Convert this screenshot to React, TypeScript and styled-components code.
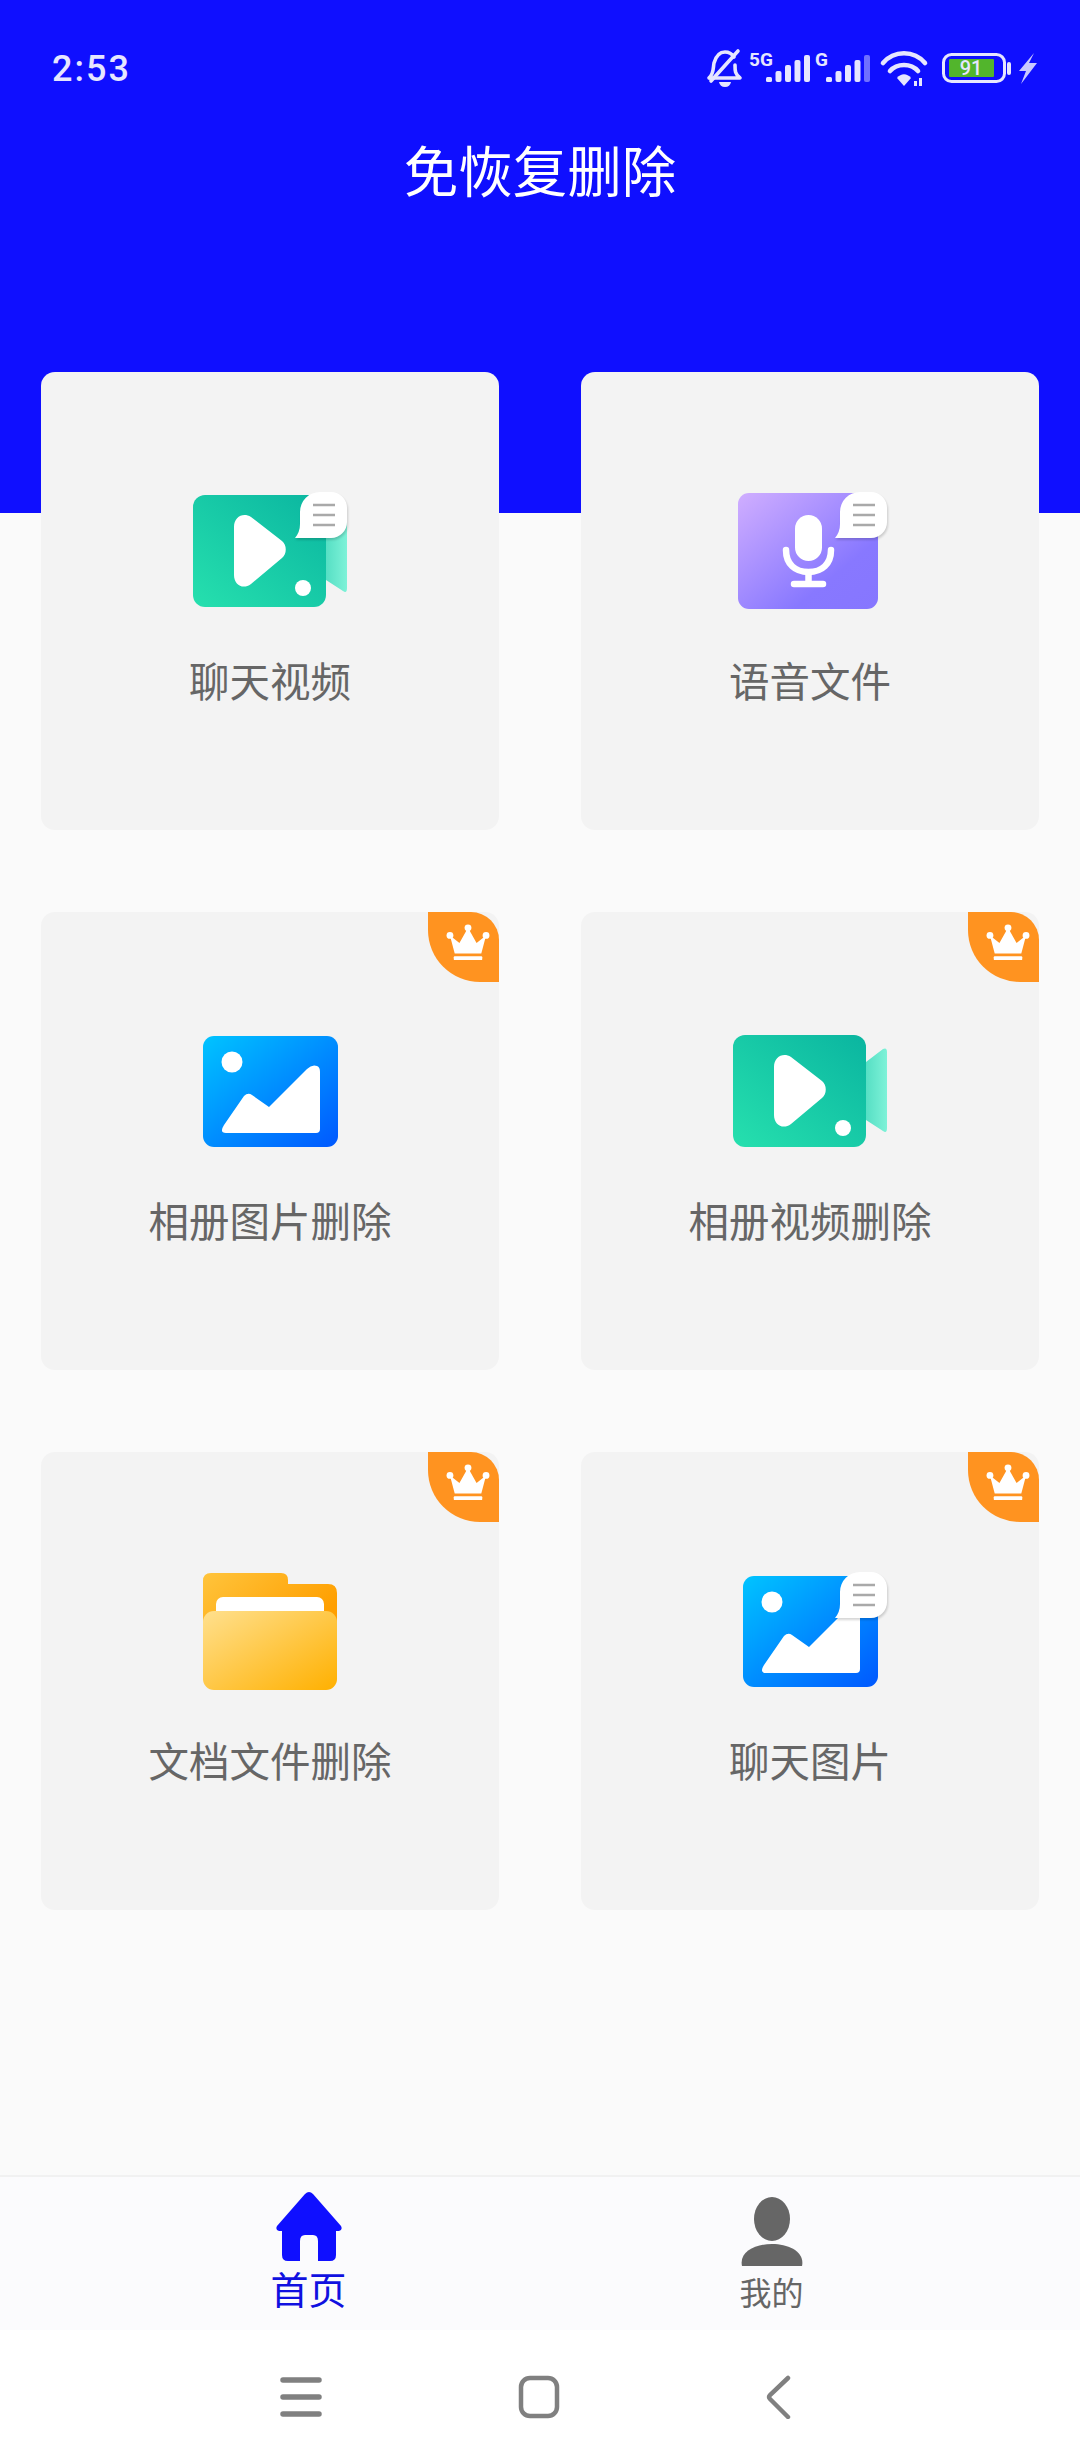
import React from "react";
import styled, { createGlobalStyle } from "styled-components";

const Global = createGlobalStyle`
  html, body { margin: 0; padding: 0; background: #fafafa; }
  * { box-sizing: border-box; }
`;

const Page = styled.div`
  width: 1080px;
  height: 2460px;
  display: flex;
  flex-direction: column;
  overflow: hidden;
  background: #fafafa;
  font-family: "Noto Sans CJK SC", "Noto Sans", sans-serif;
`;

const Header = styled.header`
  height: 513px;
  flex: none;
  background: #0f0fff;
  display: flex;
  flex-direction: column;
`;

const StatusBar = styled.div`
  height: 110px;
  padding: 28px 40px 0 52px;
  display: flex;
  align-items: center;
  justify-content: space-between;
`;

const Time = styled.span`
  font-family: Roboto, "Liberation Sans", sans-serif;
  font-weight: 500;
  font-size: 36px;
  letter-spacing: 2px;
  color: #e6e6ff;
`;

const StatusIcons = styled.svg`
  width: 340px;
  height: 50px;
  display: block;
`;

const Title = styled.h1`
  margin: 21px 0 0;
  text-align: center;
  font-size: 54.5px;
  line-height: 76px;
  font-weight: 400;
  color: #ffffff;
`;

const Grid = styled.main`
  flex: 1;
  min-height: 0;
  margin-top: -141px;
  padding: 0 41px;
  display: grid;
  grid-template-columns: 458px 458px;
  grid-auto-rows: 458px;
  gap: 82px;
  align-content: start;
`;

const Card = styled.section`
  position: relative;
  background: #f3f3f3;
  border-radius: 14px;
  padding-top: 108px;
  display: flex;
  flex-direction: column;
  align-items: center;
  overflow: hidden;
`;

const IconSvg = styled.svg`
  width: 180px;
  height: 140px;
  display: block;
  flex: none;
`;

const Label = styled.div`
  margin-top: 32px;
  font-size: 40.5px;
  line-height: 56px;
  color: #666666;
`;

const Badge = styled.div`
  position: absolute;
  top: 0;
  right: 0;
  width: 71px;
  height: 70px;
  padding: 0 0 8px 8px;
  background: #ff9320;
  border-radius: 0 28px 0 52px;
  display: flex;
  align-items: center;
  justify-content: center;
`;

const CrownSvg = styled.svg`
  width: 44px;
  height: 38px;
  display: block;
`;

const BubbleGroup = styled.g`
  filter: drop-shadow(1px 2px 1px rgba(0, 0, 0, 0.16));
`;

const TabBar = styled.nav`
  height: 155px;
  flex: none;
  background: #fbfbfd;
  border-top: 2px solid #f1f1f1;
  padding: 0 77px;
  display: grid;
  grid-template-columns: 1fr 1fr;
`;

const Tab = styled.div<{ $active?: boolean }>`
  display: flex;
  flex-direction: column;
  align-items: center;
  padding-top: ${(p) => (p.$active ? 14 : 20)}px;
`;

const TabIcon = styled.svg`
  width: 68px;
  height: 72px;
  display: block;
`;

const TabLabel = styled.span<{ $active?: boolean }>`
  font-size: ${(p) => (p.$active ? 38 : 32)}px;
  line-height: ${(p) => (p.$active ? 50 : 44)}px;
  color: ${(p) => (p.$active ? "#1010e0" : "#666666")};
`;

const NavBar = styled.div`
  height: 130px;
  flex: none;
  background: #ffffff;
  display: flex;
  align-items: flex-start;
  padding: 45px 0 0 280px;
`;

const NavIcon = styled.svg<{ $gap?: number }>`
  width: 42px;
  height: 44px;
  display: block;
  margin-right: ${(p) => p.$gap ?? 0}px;
`;

const Bubble = () => (
  <BubbleGroup>
    <path
      d="M120 32a20 20 0 0 1 20-20h11a16 16 0 0 1 16 16v14a16 16 0 0 1-16 16H115q5-6 5-14z"
      fill="#ffffff"
    />
    <path
      d="M133 25h22M133 35h22M133 45h22"
      stroke="#a9a9a9"
      strokeWidth="2.6"
      fill="none"
    />
  </BubbleGroup>
);

const VideoIcon = ({ id, chat }: { id: string; chat?: boolean }) => (
  <IconSvg viewBox="0 0 180 140">
    <defs>
      <linearGradient id={`${id}-b`} x1="0" y1="1" x2="1" y2="0">
        <stop offset="0" stopColor="#26e0ae" />
        <stop offset="1" stopColor="#0ab5a0" />
      </linearGradient>
      <linearGradient id={`${id}-f`} x1="0" y1="0" x2="1" y2="0">
        <stop offset="0" stopColor="#56dfc4" />
        <stop offset="1" stopColor="#7ef2d8" />
      </linearGradient>
    </defs>
    <path
      d="M146 42l17-13q4-2 4 3v76q0 6-4 3l-17-11z"
      fill={`url(#${id}-f)`}
    />
    <rect x="13" y="15" width="133" height="112" rx="12" fill={`url(#${id}-b)`} />
    <path
      d="M54 47c0-10 9-15 17-10l31 24c5 4 5 13 0 17l-31 26c-8 6-17 1-17-9z"
      fill="#ffffff"
    />
    <circle cx="123" cy="108" r="8" fill="#ffffff" />
    {chat && <Bubble />}
  </IconSvg>
);

const PictureIcon = ({ id, chat }: { id: string; chat?: boolean }) => (
  <IconSvg viewBox="0 0 180 140">
    <defs>
      <linearGradient id={id} x1="0" y1="0" x2="1" y2="1">
        <stop offset="0" stopColor="#00c4ff" />
        <stop offset="1" stopColor="#0058ff" />
      </linearGradient>
    </defs>
    <rect x="23" y="16" width="135" height="111" rx="11" fill={`url(#${id})`} />
    <circle cx="52" cy="42" r="10.5" fill="#ffffff" />
    <path
      d="M44 105l20-29q4-4 8-1l17 12 38-38q5-5 10-3 3 1 3 6v57q0 4-4 4H46q-7 0-2-8z"
      fill="#ffffff"
    />
    {chat && <Bubble />}
  </IconSvg>
);

const MicIcon = () => (
  <IconSvg viewBox="0 0 180 140">
    <defs>
      <linearGradient id="mic" x1="0" y1="0" x2="1" y2="1">
        <stop offset="0" stopColor="#d0aeff" />
        <stop offset="0.7" stopColor="#8878ff" />
        <stop offset="1" stopColor="#8676ff" />
      </linearGradient>
    </defs>
    <rect x="18" y="13" width="140" height="116" rx="11" fill="url(#mic)" />
    <rect x="75" y="35" width="27" height="46" rx="13.5" fill="#ffffff" />
    <path
      d="M66 70c0 14 9 22 22.5 22s22.5-8 22.5-22M88.500 92v12M74 104h29"
      fill="none"
      stroke="#ffffff"
      strokeWidth="6.500"
      strokeLinecap="round"
    />
    <Bubble />
  </IconSvg>
);

const FolderIcon = () => (
  <IconSvg viewBox="0 0 180 140">
    <defs>
      <linearGradient id="fb" x1="0" y1="0" x2="1" y2="0.5">
        <stop offset="0" stopColor="#ffc43c" />
        <stop offset="1" stopColor="#ff9f00" />
      </linearGradient>
      <linearGradient id="ff" x1="0" y1="0" x2="1" y2="1">
        <stop offset="0" stopColor="#ffe08e" />
        <stop offset="1" stopColor="#ffb000" />
      </linearGradient>
    </defs>
    <path
      d="M23 21q0-8 8-8h70q7 0 7 7v4h40q9 0 9 9v40H23z"
      fill="url(#fb)"
    />
    <rect x="36" y="37" width="108" height="40" rx="7" fill="#ffffff" />
    <rect x="23" y="51" width="134" height="79" rx="11" fill="url(#ff)" />
  </IconSvg>
);

const Crown = () => (
  <CrownSvg viewBox="0 0 46 40">
    <circle cx="4" cy="12" r="3.600" fill="#fff" />
    <circle cx="23" cy="4" r="3.600" fill="#fff" />
    <circle cx="42" cy="12" r="3.600" fill="#fff" />
    <path d="M4 12l10 8 9-16 9 16 10-8-5 19H9z" fill="#fff" />
    <rect x="8" y="34" width="30" height="4" rx="1" fill="#fff" />
  </CrownSvg>
);

const items = [
  { label: "聊天视频", icon: <VideoIcon id="v1" chat /> },
  { label: "语音文件", icon: <MicIcon /> },
  { label: "相册图片删除", icon: <PictureIcon id="p1" />, vip: true },
  { label: "相册视频删除", icon: <VideoIcon id="v2" />, vip: true },
  { label: "文档文件删除", icon: <FolderIcon />, vip: true },
  { label: "聊天图片", icon: <PictureIcon id="p2" chat />, vip: true },
];

const Bars = ({ x, dim }: { x: number; dim?: boolean }) => (
  <g fill="#e6e6ff">
    <rect x={x} y="32" width="6" height="5" rx="1.500" />
    <rect x={x + 9.5} y="26" width="6" height="11" rx="2" />
    <rect x={x + 19} y="20" width="6" height="17" rx="2" />
    <rect x={x + 28.5} y="15" width="6" height="22" rx="2" />
    <rect x={x + 38} y="10" width="6" height="27" rx="2" opacity={dim ? 0.45 : 1} />
  </g>
);

export default function App() {
  return (
    <Page>
      <Global />
      <Header>
        <StatusBar>
          <Time>2:53</Time>
          <StatusIcons viewBox="700 44 340 50" preserveAspectRatio="xMinYMin">
            <g transform="translate(0 45)">
              <g fill="none" stroke="#e6e6ff" strokeWidth="3.600" strokeLinecap="round" strokeLinejoin="round">
                <path d="M709 33c5-4 4-10 5-15 2-7 6-11 11-11 4 0 7 2 9 5M735 20c0 6 0 9 5 13H709" />
                <path d="M711 36L738 6" />
              </g>
              <path d="M719 37h12q-1 5-6 5t-6-5z" fill="#e6e6ff" />
              <text x="749" y="21" fontFamily="Roboto, sans-serif" fontWeight="700" fontSize="19" fill="#e6e6ff">5G</text>
              <Bars x={766} />
              <text x="815" y="21" fontFamily="Roboto, sans-serif" fontWeight="700" fontSize="19" fill="#e6e6ff">G</text>
              <Bars x={826} dim />
              <g fill="none" stroke="#e6e6ff" strokeWidth="4.600" strokeLinecap="round">
                <path d="M883 18c11-13 31-13 42 0" />
                <path d="M890 26c7-8 21-8 28 0" />
              </g>
              <path d="M897 33c4-5 10-5 14 0l-7 8z" fill="#e6e6ff" />
              <rect x="914" y="36" width="3" height="5" fill="#e6e6ff" />
              <rect x="919" y="33" width="3" height="8" fill="#e6e6ff" />
              <rect x="943.500" y="9.500" width="61" height="27" rx="8" fill="none" stroke="#e6e6ff" strokeWidth="3" />
              <rect x="949" y="14" width="45" height="18" rx="1" fill="#52b52c" />
              <text x="971" y="30" textAnchor="middle" fontFamily="Roboto, sans-serif" fontWeight="500" fontSize="20" fill="#e6e6ff">91</text>
              <rect x="1007" y="17" width="4" height="13" rx="2" fill="#e6e6ff" />
              <path d="M1034 8l-15 18h7l-5 13 16-21h-8z" fill="#c9c9ff" />
            </g>
          </StatusIcons>
        </StatusBar>
        <Title>免恢复删除</Title>
      </Header>
      <Grid>
        {items.map((it) => (
          <Card key={it.label}>
            {it.vip && (
              <Badge>
                <Crown />
              </Badge>
            )}
            {it.icon}
            <Label>{it.label}</Label>
          </Card>
        ))}
      </Grid>
      <TabBar>
        <Tab $active>
          <TabIcon viewBox="0 0 68 72">
            <path
              d="M30 3q4-4 8 0l28 32q2 4-2 5h-3v24q0 6-6 6H43V50q0-6-5-6h-8q-5 0-5 6v20H13q-6 0-6-6V40H4q-4-1-2-5z"
              fill="#0f0fff"
            />
          </TabIcon>
          <TabLabel $active>首页</TabLabel>
        </Tab>
        <Tab>
          <TabIcon viewBox="0 0 68 72">
            <ellipse cx="34" cy="22" rx="18" ry="22" fill="#666666" />
            <path d="M4 69c-3-14 13-22 30-22s33 8 30 22z" fill="#666666" />
          </TabIcon>
          <TabLabel>我的</TabLabel>
        </Tab>
      </TabBar>
      <NavBar>
        <NavIcon viewBox="0 0 42 44" $gap={196}>
          <path d="M3 5h36M3 22h36M3 39h36" stroke="#808080" strokeWidth="5.500" strokeLinecap="round" />
        </NavIcon>
        <NavIcon viewBox="0 0 42 44" $gap={202}>
          <rect x="3" y="3" width="36" height="38" rx="9" fill="none" stroke="#808080" strokeWidth="4.500" />
        </NavIcon>
        <NavIcon viewBox="0 0 42 44">
          <path d="M26 3L8 20q-2 2 0 4l18 18" fill="none" stroke="#808080" strokeWidth="4.500" strokeLinecap="round" />
        </NavIcon>
      </NavBar>
    </Page>
  );
}
